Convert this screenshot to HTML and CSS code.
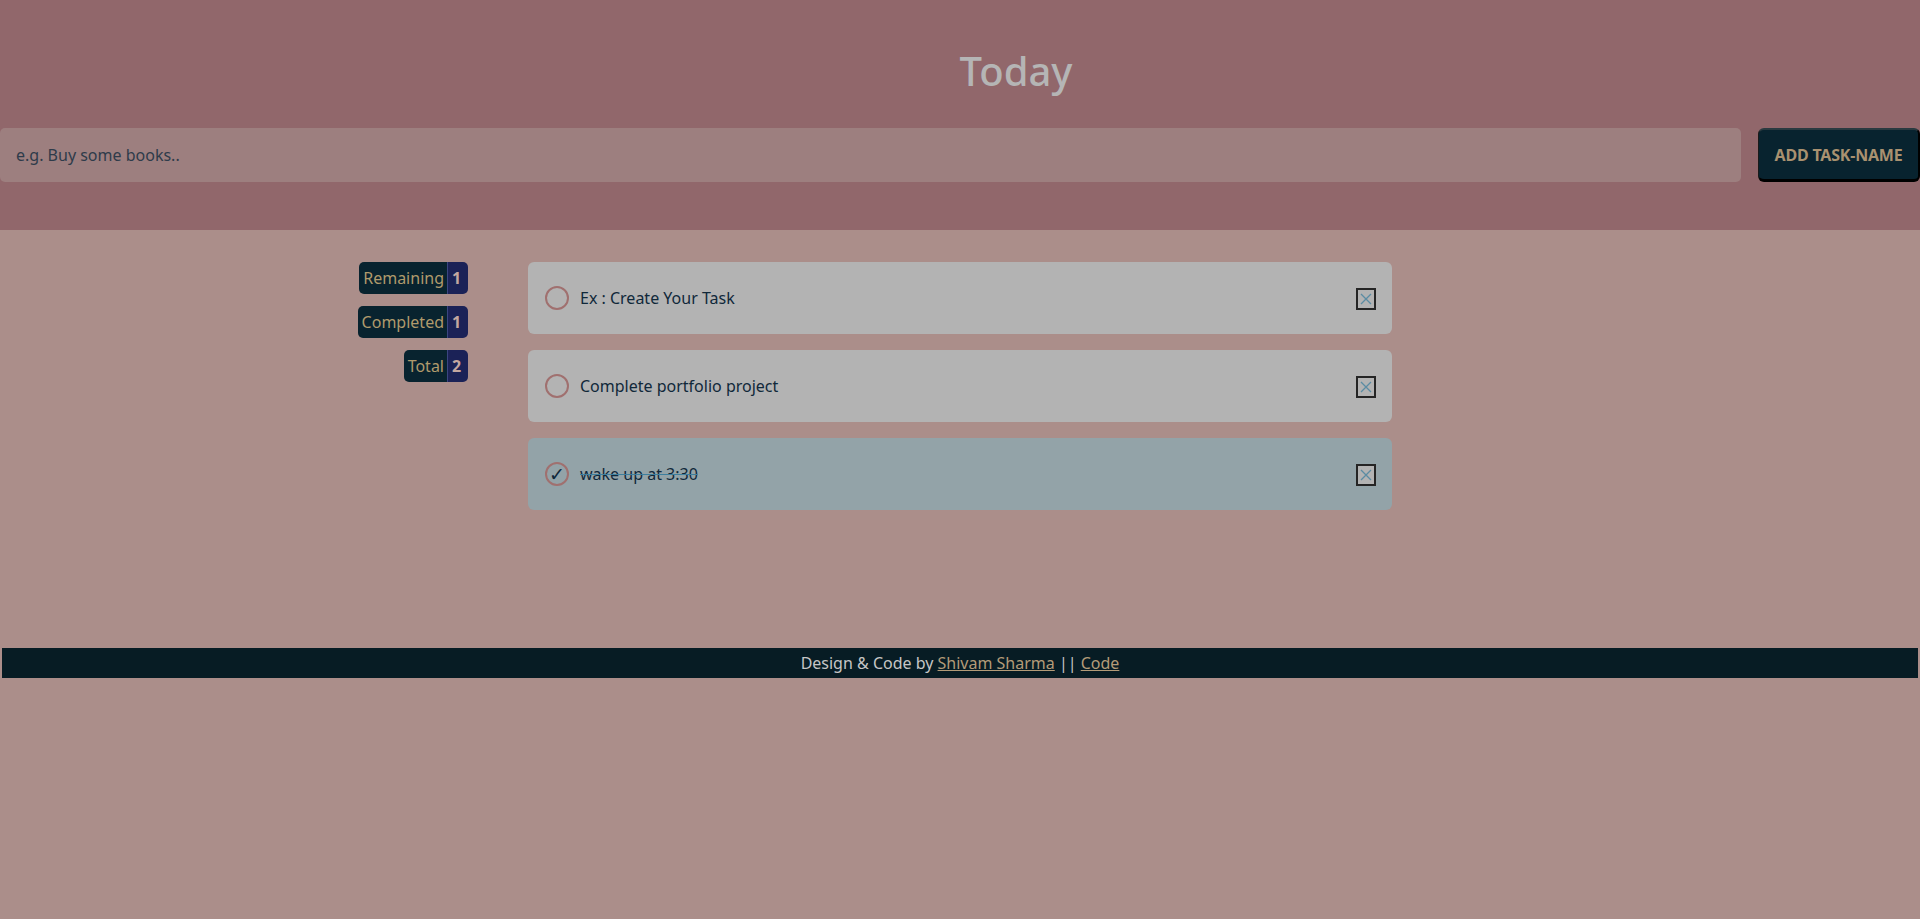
FILE: index.html
```html
<!DOCTYPE html>
<html lang="en">
<head>
<meta charset="utf-8">
<title>Today</title>
<link rel="stylesheet" href="styles.css">
</head>
<body>
<header class="top">
  <h1 class="title">Today</h1>
  <form class="add-row">
    <input class="task-input" type="text" placeholder="e.g. Buy some books..">
    <button class="add-btn" type="button">ADD TASK-NAME</button>
  </form>
</header>
<main class="main">
  <aside class="stats">
    <div class="badge"><span class="badge-label">Remaining</span><span class="badge-num">1</span></div>
    <div class="badge"><span class="badge-label">Completed</span><span class="badge-num">1</span></div>
    <div class="badge"><span class="badge-label">Total</span><span class="badge-num">2</span></div>
  </aside>
  <ul class="tasks">
    <li class="task">
      <span class="check"></span>
      <span class="task-text">Ex : Create Your Task</span>
      <span class="close">
        <svg width="14" height="14" viewBox="0 0 14 14"><path d="M2 2 L12 12 M12 2 L2 12" stroke="#5b8ca3" stroke-width="1.3" fill="none"/></svg>
      </span>
    </li>
    <li class="task">
      <span class="check"></span>
      <span class="task-text">Complete portfolio project</span>
      <span class="close">
        <svg width="14" height="14" viewBox="0 0 14 14"><path d="M2 2 L12 12 M12 2 L2 12" stroke="#5b8ca3" stroke-width="1.3" fill="none"/></svg>
      </span>
    </li>
    <li class="task done">
      <span class="check">✓</span>
      <span class="task-text">wake up at 3:30</span>
      <span class="close">
        <svg width="14" height="14" viewBox="0 0 14 14"><path d="M2 2 L12 12 M12 2 L2 12" stroke="#5b8ca3" stroke-width="1.3" fill="none"/></svg>
      </span>
    </li>
  </ul>
  <div class="spacer"></div>
</main>
<footer class="footer">
  Design &amp; Code by <a href="#">Shivam Sharma</a> || <a href="#">Code</a>
</footer>
</body>
</html>
```
FILE: styles.css
```css
html, body {
  margin: 0;
  padding: 0;
}
body {
  background: #ab8e8a;
  font-family: "Noto Sans", "Open Sans", sans-serif;
  font-size: 16px;
  min-height: 919px;
}
.top {
  background: #91676b;
  padding: 44px 0 48px;
}
.title {
  margin: 0;
  font-size: 40px;
  font-weight: 500;
  line-height: 1.362;
  color: #b5b5b5;
  text-align: center;
  padding-left: 112px;
  height: 54px;
}
.add-row {
  display: flex;
  gap: 17px;
  margin: 30px 0 0;
  height: 54px;
}
.task-input {
  flex: 1;
  border: none;
  background: #9d7f7f;
  border-radius: 5px;
  padding: 0 16px;
  font-family: inherit;
  font-size: 16px;
  color: #2d3a48;
  outline: none;
}
.task-input::placeholder {
  color: #2e3b4a;
}
.add-btn {
  width: 162px;
  background: #08232f;
  color: #a99170;
  font-family: inherit;
  font-weight: 700;
  font-size: 16px;
  border: none;
  border-top: 2px solid #2a3a40;
  border-right: 2px solid #000;
  border-bottom: 3px solid #000;
  border-left: 1px solid #1a1a1a;
  border-radius: 6px;
  padding: 0;
  letter-spacing: -0.2px;
}
.main {
  display: grid;
  grid-template-columns: 1fr 864px 1fr;
  padding-top: 32px;
  height: 418px;
  box-sizing: border-box;
}
.stats {
  display: flex;
  flex-direction: column;
  align-items: flex-end;
  gap: 12px;
  padding-right: 60px;
}
.badge {
  display: flex;
  height: 32px;
  border-radius: 5px;
  overflow: hidden;
  line-height: 32px;
  font-size: 16px;
}
.badge-label {
  background: #08232f;
  color: #b09a6c;
  padding: 0 3px 0 4px;
}
.badge-num {
  background: #1b2257;
  color: #c4a7a0;
  font-weight: 700;
  width: 16px;
  padding-left: 4px;
  border-left: 1px solid #3a4580;
}
.tasks {
  list-style: none;
  margin: 0;
  padding: 0;
  display: flex;
  flex-direction: column;
  gap: 16px;
}
.task {
  height: 72px;
  background: #b3b3b3;
  border-radius: 6px;
  display: flex;
  align-items: center;
  padding: 0 16px 0 17px;
  box-sizing: border-box;
}
.task.done {
  background: #93a3a8;
}
.check {
  width: 20px;
  height: 20px;
  border: 2px solid #a0706f;
  border-radius: 50%;
  display: flex;
  align-items: center;
  justify-content: center;
  font-size: 19px;
  color: #10283a;
  line-height: 1;
  flex: none;
}
.task-text {
  flex: 1;
  margin-left: 11px;
  color: #10283a;
  font-size: 16px;
}
.done .task-text {
  text-decoration: line-through;
  text-decoration-color: #3e7f9e;
}
.close {
  width: 16px;
  height: 18px;
  border: 2px solid #252525;
  display: flex;
  align-items: center;
  justify-content: center;
  background: #b3b3b3;
  margin-top: 1px;
}
.footer {
  margin: 0 2px;
  height: 30px;
  line-height: 30px;
  background: #071c24;
  color: #c6c6c6;
  text-align: center;
  font-size: 16px;
}
.footer a {
  color: #b39b78;
}
```
